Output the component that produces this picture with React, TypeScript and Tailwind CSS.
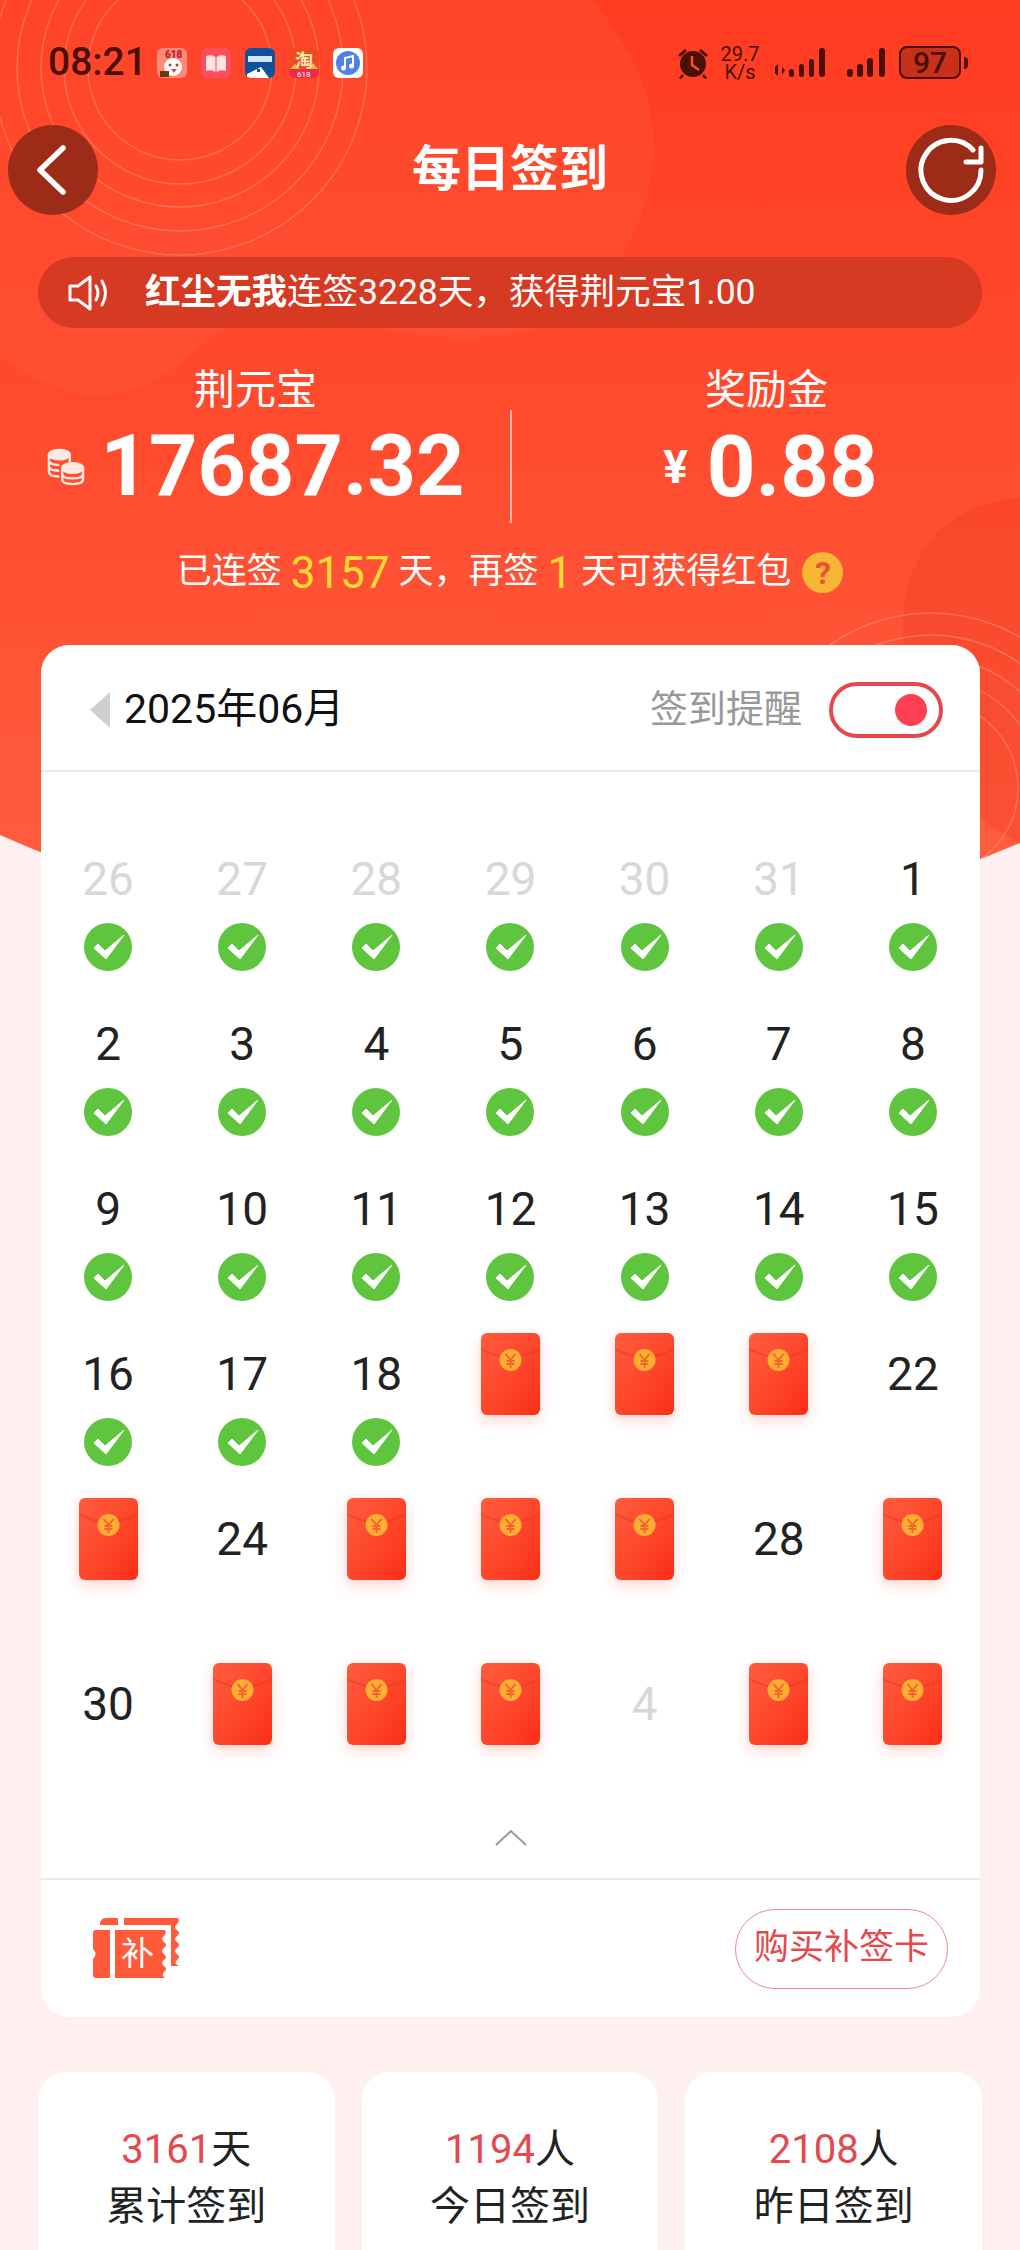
import React from 'react';

const FONT = 'font-["Roboto","Noto_Sans_CJK_SC",sans-serif]';

const rings = (cx: number, cy: number, radii: number[]) =>
  radii.map(r => <circle key={r} cx={cx} cy={cy} r={r} fill="none" stroke="#ffffff" strokeOpacity={0.2} strokeWidth={1.5} />);

// decorative header backdrop, sits under the page content
const HeaderBackdrop = () => (
  <svg className="absolute left-0 top-0" width={1020} height={1000} viewBox="0 0 1020 1000">
    <defs>
      <linearGradient id="hdr" x1="0" y1="0" x2="0" y2="1">
        <stop offset="0" stopColor="#ff3b20" />
        <stop offset="1" stopColor="#ff5f40" />
      </linearGradient>
    </defs>
    <path d="M0 0H1020V843Q510 1060 0 835Z" fill="url(#hdr)" />
    <path
      d="M0 0H593C640 60 660 110 652 170C645 230 610 290 553 322C500 345 430 340 380 328C340 316 310 310 280 313C240 318 215 335 190 355C160 380 130 395 100 395C65 395 35 380 0 357Z"
      fill="#ff6a4a"
      fillOpacity={0.2}
    />
    <path d="M1020 498C950 502 903 550 903 625C903 700 930 800 1020 843Z" fill="#f03c22" fillOpacity={0.35} />
    {rings(180, 68, [92, 116, 139, 163, 187])}
    {rings(931, 788, [87, 109, 131, 153, 175])}
  </svg>
);

const AppIcon = ({ bg, children }: { bg: string; children?: React.ReactNode }) => (
  <div className="flex h-[30px] w-[30px] items-center justify-center overflow-hidden rounded-[6px]" style={{ background: bg }}>
    {children}
  </div>
);

const StatusBar = () => (
  <div className="flex h-[125px] items-center pl-[48px] pr-[52px] text-[#4a0f05]">
    <span className="w-[97px] text-[39px] font-medium leading-none">08:21</span>
    <div className="ml-[12px] flex gap-[14px]">
      <AppIcon bg="#ff8a78">
        <svg width="30" height="30" viewBox="0 0 30 30">
          <circle cx="16" cy="19" r="9" fill="#fff" />
          <rect x="3" y="23" width="9" height="6" fill="#6b3a12" />
          <circle cx="13" cy="17" r="1.500" fill="#c33" />
          <circle cx="20" cy="17" r="1.500" fill="#c33" />
          <path d="M14 21h6l-3 4z" fill="#e8434a" />
          <text x="8" y="10" fontSize="10" fontWeight="700" fill="#b3122a">618</text>
        </svg>
      </AppIcon>
      <AppIcon bg="#ff4d5e">
        <svg width="30" height="30" viewBox="0 0 30 30">
          <path d="M5 8q6-2 9.500 1v15q-4-3-9.500-1zM25 8q-6-2-9.500 1v15q4-3 9.500-1z" fill="#ffe3e0" />
        </svg>
      </AppIcon>
      <AppIcon bg="#10529c">
        <svg width="30" height="30" viewBox="0 0 30 30">
          <rect x="3" y="8" width="24" height="6" fill="#d7e6f6" />
          <path d="M2 26l14-7 8 11H2z" fill="#fff" />
          <rect x="12" y="21" width="3" height="3" fill="#10529c" />
        </svg>
      </AppIcon>
      <AppIcon bg="#f0502a">
        <svg width="30" height="30" viewBox="0 0 30 30">
          <rect x="0" y="0" width="30" height="22" fill="#f04a20" />
          <path d="M0 22l6-6 6 6zM18 22l6-7 6 7z" fill="#ffb840" />
          <rect x="0" y="21" width="30" height="9" fill="#ee2a4a" />
          <text x="6" y="19" fontSize="18" fontWeight="700" fill="#ffe9b0">淘</text>
          <text x="8" y="29" fontSize="8" fill="#fff">618</text>
        </svg>
      </AppIcon>
      <AppIcon bg="#fff">
        <svg width="30" height="30" viewBox="0 0 30 30">
          <circle cx="15" cy="15" r="12" fill="#4f82e8" />
          <path d="M12 20V10l8-2v10" fill="none" stroke="#fff" strokeWidth="2" />
          <circle cx="10.500" cy="20" r="2.500" fill="#fff" />
          <circle cx="18.500" cy="18" r="2.500" fill="#fff" />
        </svg>
      </AppIcon>
    </div>
    <div className="ml-auto flex items-center">
      <svg width="34" height="34" viewBox="0 0 34 34" fill="currentColor">
        <circle cx="17" cy="18" r="13" />
        <path d="M2 9l7-6 2 2-7 6zM32 9l-7-6-2 2 7 6zM6 28l-3 4 2 1 3-3zM28 28l3 4-2 1-3-3z" />
        <path d="M16 10v9l7 5" fill="none" stroke="#ff4a2c" strokeWidth="2.500" />
      </svg>
      <div className="ml-[9px] flex w-[42px] flex-col items-center text-[20px] leading-[18px]">
        <span>29.7</span>
        <span>K/s</span>
      </div>
      <svg className="ml-[11px]" width="58" height="32" viewBox="0 0 58 32" fill="currentColor">
        <path d="M3 20l3-3v12l-3-3zM10 20l3 3-3 5z" />
        <rect x="17" y="22" width="5" height="8" rx="2.500" />
        <rect x="27" y="17" width="5" height="13" rx="2.500" />
        <rect x="37" y="12" width="5" height="18" rx="2.500" />
        <rect x="47" y="1" width="6" height="29" rx="3" />
      </svg>
      <svg className="ml-[16px]" width="42" height="32" viewBox="0 0 42 32" fill="currentColor">
        <rect x="1" y="22" width="6" height="8" rx="3" />
        <rect x="11" y="17" width="6" height="13" rx="3" />
        <rect x="21" y="11" width="6" height="19" rx="3" />
        <rect x="33" y="1" width="6" height="29" rx="3" />
      </svg>
      <div className="ml-[11px] flex h-[33px] w-[62px] items-center justify-center rounded-[8px] border-2 border-[#4a0f05] bg-[#c9301a] text-[30px] font-medium leading-none">
        97
      </div>
      <div className="ml-[3px] h-[12px] w-[4px] rounded-r-sm bg-[#4a0f05]" />
    </div>
  </div>
);

const NavBar = () => (
  <div className="grid h-[90px] grid-cols-[1fr_auto_1fr] items-center pl-[8px] pr-[24px]">
    <button className="flex h-[90px] w-[90px] items-center justify-center rounded-full bg-[#9c2c17]">
      <svg width="40" height="52" viewBox="0 0 40 52" fill="none" stroke="#fff" strokeWidth="5.500" strokeLinecap="round" strokeLinejoin="round">
        <path d="M30 4L7 26l23 22" />
      </svg>
    </button>
    <h1 className="relative left-[8px] text-[49px] font-bold text-white">每日签到</h1>
    <button className="flex h-[90px] w-[90px] items-center justify-center justify-self-end rounded-full bg-[#9c2c17]">
      <svg width="70" height="70" viewBox="0 0 70 70" fill="none" stroke="#fff" strokeWidth="5" strokeLinecap="round" strokeLinejoin="round">
        <path d="M65 35a30 30 0 1 1-8-20" />
        <path d="M65 13v14H50" />
      </svg>
    </button>
  </div>
);

const Notice = () => (
  <div className="mx-[38px] mt-[42px] flex h-[71px] items-center rounded-full bg-[#d63a22] pl-[30px] text-[35.5px] text-white">
    <svg width="44" height="36" viewBox="0 0 44 36" fill="none" stroke="#fff" strokeWidth="3" strokeLinejoin="round" strokeLinecap="round">
      <path d="M2 11h8L22 2v32L10 25H2z" />
      <path d="M28 11q4 7 0 14M34 6q7 12 0 24" />
    </svg>
    <span className="ml-[33px] font-bold">红尘无我</span>
    <span>连签3228天，获得荆元宝1.00</span>
  </div>
);

const Balance = () => (
  <div className="flex h-[214px] items-start pt-[35px] text-white">
    <div className="flex w-[510px] flex-col items-center pl-[1px]">
      <span className="text-[41px] leading-[54px]">荆元宝</span>
      <div className="flex items-center">
        <svg width="38" height="40" viewBox="0 0 40 40" fill="none" stroke="#ffe9e2" strokeWidth="2.500">
          <ellipse cx="13" cy="7" rx="11" ry="5" fill="#ffe9e2" />
          <path d="M2 7v18q0 5 11 5M24 7v8M2 13q0 5 11 5M2 19q0 5 11 5" />
          <ellipse cx="27" cy="21" rx="11" ry="5" fill="#ffe9e2" />
          <path d="M16 21v12q0 5 11 5t11-5V21M16 27q0 5 11 5t11-5" />
        </svg>
        <span className="ml-[16px] text-[84.5px] font-bold leading-[100px]">17687.32</span>
      </div>
    </div>
    <div className="mt-[47px] h-[113px] w-[2px] bg-white/60" />
    <div className="flex flex-1 flex-col items-center pr-[1px]">
      <span className="ml-[2px] text-[41px] leading-[54px]">奖励金</span>
      <div className="ml-[10px] flex items-center">
        <span className="text-[46px] font-bold">¥</span>
        <span className="ml-[19px] text-[85px] font-bold leading-[100px]">0.88</span>
      </div>
    </div>
  </div>
);

const Streak = () => (
  <div className="flex h-[61px] items-center justify-center text-[35px] text-white">
    <span>已连签</span>
    <span className="mx-[9px] text-[44px] text-[#ffdc32]">3157</span>
    <span>天，再签</span>
    <span className="mx-[9px] text-[44px] text-[#ffdc32]">1</span>
    <span>天可获得红包</span>
    <span className="ml-[11px] flex h-[41px] w-[41px] items-center justify-center rounded-full bg-[#f8b636] text-[32px] font-bold leading-none text-[#f0512f]">?</span>
  </div>
);

const Check = () => (
  <svg width="48" height="48" viewBox="0 0 48 48">
    <circle cx="24" cy="24" r="24" fill="#5fc53f" />
    <path d="M10 25l4-4 7 7L40 12 22 36z" fill="#fff" stroke="#fff" strokeWidth="1" strokeLinejoin="round" />
  </svg>
);

const RedPacket = () => (
  <div className="relative -mt-px h-[82px] w-[59px] overflow-hidden rounded-[6px] bg-gradient-to-br from-[#ff5c3e] to-[#fb2c14] shadow-[0_5px_14px_rgba(255,80,50,0.25)]">
    <svg className="absolute left-0 top-0" width="59" height="40" viewBox="0 0 59 40">
      <path d="M0 16Q29.500 32 59 16" fill="none" stroke="#e03a20" strokeOpacity={0.45} strokeWidth="2" />
      <circle cx="29.500" cy="27" r="11" fill="#ffad33" />
      <path d="M24.500 21l5 6 5-6M29.500 27v8M25.500 28h8M25.500 31h8" fill="none" stroke="#f0652c" strokeWidth="1.800" />
    </svg>
  </div>
);

type Day = { n?: number; muted?: boolean; done?: boolean };

const DAYS: Day[] = [
  { n: 26, muted: true, done: true }, { n: 27, muted: true, done: true }, { n: 28, muted: true, done: true },
  { n: 29, muted: true, done: true }, { n: 30, muted: true, done: true }, { n: 31, muted: true, done: true },
  { n: 1, done: true },
  ...[2, 3, 4, 5, 6, 7, 8, 9, 10, 11, 12, 13, 14, 15, 16, 17, 18].map(n => ({ n, done: true })),
  {}, {}, {}, { n: 22 },
  {}, { n: 24 }, {}, {}, {}, { n: 28 }, {},
  { n: 30 }, {}, {}, {}, { n: 4, muted: true }, {}, {},
];

const DayCell = ({ day }: { day: Day }) => (
  <div className="flex h-[165px] flex-col items-center">
    {day.n === undefined ? (
      <RedPacket />
    ) : (
      <>
        <span className={`mt-[10px] text-[46px] leading-[60px] ${day.muted ? 'text-[#d8d8d8]' : 'text-[#222222]'}`}>{day.n}</span>
        {day.done && <div className="mt-[14px]"><Check /></div>}
      </>
    )}
  </div>
);

const TicketIcon = () => (
  <div className="relative h-[62px] w-[88px]">
    <svg className="absolute left-0 top-0" width="88" height="62" viewBox="0 0 88 62" fill="#ff5a3a">
      <path d="M7 7Q7 0 13 0H25V7Z" />
      <path d="M31 0H85Q87 3 84 6Q80 9 84 12Q88 15 84 18Q80 21 84 24Q88 27 84 30Q80 33 84 36Q88 39 84 42Q80 45 86 48H78V7H31Z" />
      <path d="M3 12H17V60H3Q0 60 0 57V41Q5 36 0 31V15Q0 12 3 12Z" />
      <path d="M22 12H72Q74 15 71 18Q67 21 71 24Q75 27 71 30Q67 33 71 36Q75 39 71 42Q67 45 71 48Q75 51 71 54Q68 57 72 60H22Z" />
    </svg>
    <span className="absolute left-[28px] top-[18px] text-[33px] leading-[36px] text-white">补</span>
  </div>
);

const Calendar = () => (
  <div className="relative ml-[41px] mr-[40px] mt-[42px] overflow-hidden rounded-[28px] bg-white">
    <div className="flex h-[127px] items-center border-b-2 border-[#ebebeb] pl-[49px] pr-[37px] pt-[4px]">
      <svg width="20" height="36" viewBox="0 0 20 36"><path d="M20 0v36L0 18z" fill="#cfcfcf" /></svg>
      <span className="ml-[14px] text-[41px] text-[#111111]">2025年06月</span>
      <span className="ml-auto text-[38px] text-[#999999]">签到提醒</span>
      <div className="ml-[27px] flex h-[56px] w-[114px] items-center justify-end rounded-full border-[4px] border-[#e5484d] pr-[12px]">
        <div className="h-[32px] w-[32px] rounded-full bg-[#ff4050]" />
      </div>
    </div>
    <div className="grid grid-cols-7 pt-[67px]">
      {DAYS.map((d, i) => <DayCell key={i} day={d} />)}
    </div>
    <div className="flex h-[49px] items-start justify-center">
      <svg width="34" height="18" viewBox="0 0 34 18" fill="none" stroke="#999999" strokeWidth="2">
        <path d="M2 16L17 2l15 14" />
      </svg>
    </div>
    <div className="flex h-[139px] items-center border-t-2 border-[#ebebeb] pl-[52px] pr-[32px]">
      <TicketIcon />
      <button className="ml-auto flex h-[80px] w-[213px] items-center justify-center rounded-full border-[1.5px] border-[#ee8a86] text-[35px] text-[#e5484d]">
        购买补签卡
      </button>
    </div>
  </div>
);

const SUMMARY = [
  { value: '3161', unit: '天', label: '累计签到' },
  { value: '1194', unit: '人', label: '今日签到' },
  { value: '2108', unit: '人', label: '昨日签到' },
];

const Summary = () => (
  <div className="mx-[38px] mt-[55px] grid grid-cols-3 gap-[27px]">
    {SUMMARY.map(s => (
      <div key={s.label} className="flex h-[240px] flex-col items-center rounded-[28px] bg-white pt-[50px]">
        <div className="text-[40px] leading-[56px] text-[#222222]">
          <span className="text-[#e5484d]">{s.value}</span>{s.unit}
        </div>
        <div className="text-[40px] leading-[58px] text-[#222222]">{s.label}</div>
      </div>
    ))}
  </div>
);

export default function App() {
  return (
    <div className={`relative h-[2250px] w-[1020px] overflow-hidden bg-[#fef0ef] ${FONT}`}>
      <HeaderBackdrop />
      <div className="relative">
        <StatusBar />
        <NavBar />
        <Notice />
        <Balance />
        <Streak />
        <Calendar />
        <Summary />
      </div>
    </div>
  );
}
